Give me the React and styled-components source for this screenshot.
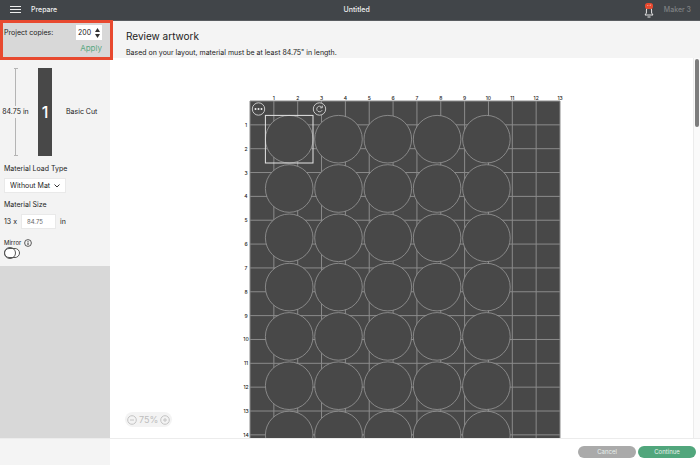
import React, { useState } from "react";
import styled, { createGlobalStyle } from 'styled-components'

const GlobalStyle = createGlobalStyle`
  * {
    box-sizing: border-box;
  }

  body {
    margin: 0;
    font-family: Inter, "Liberation Sans", sans-serif;
    font-size: 7px;
    line-height: 10px;
    color: #222;
  }

  button, input, select {
    font: inherit;
    color: inherit;
  }
`

const Page = styled.div`
  display: flex;
  flex-direction: column;
  height: 100vh;
  overflow: hidden;
  background: #fff;
`

const TopBar = styled.header`
  flex: none;
  display: grid;
  grid-template-columns: 27fr auto 26fr;
  align-items: center;
  height: 21px;
  padding: 0 9px 0 10px;
  background: #414549;
  border-bottom: 1px solid #595c60;
  color: #f0f0f0;
  font-weight: 500;
`

const BarGroup = styled.div`
  display: flex;
  align-items: center;
  justify-content: ${props => props.$end ? 'flex-end' : 'flex-start'};
  gap: ${props => props.$end ? '10px' : '10px'};
`

const IconButton = styled.button`
  display: flex;
  padding: 0;
  border: 0;
  background: none;
`

const Machine = styled.span`
  color: #7f8183;
`

const Body = styled.div`
  flex: 1;
  display: flex;
  min-height: 0;
`

const Sidebar = styled.aside`
  flex: none;
  display: flex;
  flex-direction: column;
  width: 110px;
  background: #d8d8d8;
`

const CopiesPanel = styled.form`
  position: relative;
  display: flex;
  flex-direction: column;
  align-items: flex-end;
  gap: 3px;
  height: 39px;
  padding: 4px 8px 0 4px;

  &::after {
    content: "";
    position: absolute;
    inset: -1px -3px 0 0;
    border: 3px solid #e8492f;
    pointer-events: none;
  }
`

const CopiesRow = styled.div`
  display: flex;
  align-items: center;
  justify-content: space-between;
  width: 100%;
`

const Stepper = styled.div`
  display: flex;
  align-items: center;
  width: 26px;
  height: 15px;
  padding: 0 2px;
  background: #fff;

  input {
    flex: 1;
    width: 0;
    padding: 0;
    border: 0;
    outline: 0;
    background: none;
  }
`

const Arrows = styled.div`
  display: flex;
  flex-direction: column;
  gap: 2px;
`

const ApplyButton = styled.button`
  padding: 0;
  border: 0;
  background: none;
  color: #5ba883;
  font-size: 8px;
`

const Settings = styled.section`
  display: flex;
  flex-direction: column;
  align-items: flex-start;
  padding: 8px 4px;
  background: #f3f3f3;
`

const MatPreview = styled.div`
  display: flex;
  align-items: center;
  width: 100%;
  margin: 0 0 8px -2px;
`

const Measure = styled.div`
  display: flex;
  flex-direction: column;
  align-items: center;
  gap: 1px;
  width: 27px;
  height: 88px;
  margin-right: 9px;
  white-space: nowrap;
`

const MeasureLine = styled.div`
  flex: 1;
  width: 4px;
  border-top: ${props => props.$end ? 'none' : '1px solid #b4b4b4'};
  border-bottom: ${props => props.$end ? '1px solid #b4b4b4' : 'none'};
  background: linear-gradient(#b4b4b4, #b4b4b4) center / 1px 100% no-repeat;
`

const MatThumb = styled.div`
  display: flex;
  align-items: center;
  justify-content: center;
  width: 14px;
  height: 88px;
  margin-right: 14px;
  background: #484848;
  color: #fff;
  font-size: 16px;
  font-weight: 500;
`

const Label = styled.label`
  font-size: ${props => props.$small ? '6px' : '7px'};
`

const SelectBox = styled.div`
  display: grid;
  align-items: center;
  width: 62px;
  margin: 4px 0 7px;
  background: #fff;

  select, svg {
    grid-area: 1 / 1;
  }

  select {
    appearance: none;
    height: 15px;
    padding: 0 0 0 5px;
    border: 1px solid #e9e9e9;
    background: none;
  }

  svg {
    justify-self: end;
    margin-right: 6px;
    pointer-events: none;
  }
`

const SizeRow = styled.div`
  display: flex;
  align-items: center;
  gap: 4px;
  margin: 4px 0 9px;

  input {
    width: 35px;
    height: 15px;
    padding: 0 5px;
    border: 1px solid #e9e9e9;
    background: #fff;
    color: #666;
    font-size: 6px;
  }
`

const MirrorRow = styled.div`
  display: flex;
  align-items: center;
  gap: 3px;
`

const Toggle = styled.input`
  appearance: none;
  display: flex;
  align-items: center;
  width: 16px;
  height: 10px;
  margin: 0;
  border: 1px solid #555;
  border-radius: 5px;
  background: #fff;

  &::before {
    content: "";
    flex: none;
    width: 10px;
    height: 10px;
    margin-left: -1px;
    border: 1px solid #555;
    border-radius: 50%;
  }

  &:checked::before {
    margin-left: 5px;
  }
`

const Main = styled.main`
  flex: 1;
  display: flex;
  flex-direction: column;
  min-width: 0;
`

const Intro = styled.div`
  flex: none;
  height: 37px;
  padding: 8px 16px 0;
  background: #f4f4f4;
`

const Title = styled.h1`
  margin: 0 0 5px;
  font-size: 10px;
  font-weight: 400;
  line-height: 14px;
`

const Message = styled.p`
  margin: 0;
`

const Canvas = styled.div`
  flex: 1;
  position: relative;
  display: flex;
  justify-content: center;
  min-height: 0;
  padding: 32px 2px 0 0;
  overflow: hidden;
`

const MatDrawing = styled.svg`
  flex: none;
  font-size: 5px;
  font-weight: 500;
  text-anchor: middle;
`

const ScrollTrack = styled.div`
  position: absolute;
  top: 0;
  right: 0;
  bottom: 0;
  width: 7px;
  padding: 1px;
  border-left: 1px solid #ececec;
  background: #fafafa;
`

const ScrollThumb = styled.div`
  height: 68px;
  border-radius: 3px;
  background: #7d7d7d;
`

const ZoomControl = styled.div`
  position: absolute;
  left: 15px;
  bottom: 11px;
  display: flex;
  align-items: center;
  gap: 2px;
  height: 15px;
  padding: 0 2px;
  border-radius: 8px;
  background: #f3f3f3;
  color: #bdbdbd;
  font-size: 9px;
`

const Footer = styled.footer`
  flex: none;
  display: flex;
  height: 27px;
  border-top: 1px solid #ececec;
`

const FooterSide = styled.div`
  width: 110px;
  background: #f4f4f4;
`

const Actions = styled.div`
  flex: 1;
  display: flex;
  align-items: center;
  justify-content: flex-end;
  gap: 2px;
  padding-right: 4px;
`

const PillButton = styled.button`
  width: 58px;
  height: 12px;
  padding: 0;
  border: 0;
  border-radius: 6px;
  background: ${props => props.$primary ? '#51a67c' : '#aaa'};
  color: #e9f1ec;
  font-size: 6px;
  line-height: 12px;
`

const INCH = 310 / 13
const PITCH = 49.3
const SHAPE = { x: 15.4, y: 14.4, size: 47.6 }

const range = n => Array.from({ length: n }, (_, i) => i)

const MenuIcon = () => (
  <svg width="11" height="8" viewBox="0 0 11 8" stroke="#eee">
    <path d="M0 .5h11M0 3.5h11M0 6.5h11" />
  </svg>
)

const BellIcon = () => (
  <svg width="10" height="15" viewBox="0 0 10 15">
    <path d="M1 12h8L7.600 10V7a2.600 2.600 0 0 0-5.200 0v3z" fill="none" stroke="#e6e6e6" />
    <path d="M3.500 14h3" stroke="#e6e6e6" />
    <rect x="1" y="0" width="8" height="6" rx="2.500" fill="#e8492f" />
    <path d="M3.400 2l.8 1M6.600 1.600l-.6 1.400" stroke="#f6c4ba" strokeWidth=".8" />
  </svg>
)

const InfoIcon = () => (
  <svg width="8" height="8" viewBox="0 0 8 8" fill="none" stroke="#333">
    <circle cx="4" cy="4" r="3.400" strokeWidth=".8" />
    <path d="M4 3.500v2.500M4 2v.8" />
  </svg>
)

const ZoomIcon = ({ plus }) => (
  <svg width="10" height="10" viewBox="0 0 10 10" fill="none" stroke="#c4c4c4">
    <circle cx="5" cy="5" r="4.300" />
    <path d={plus ? 'M3 5h4M5 3v4' : 'M3 5h4'} />
  </svg>
)

const Mat = () => (
  <MatDrawing width="330" height="373" viewBox="-11 -11 330 373">
    {range(13).map(i => (
      <text key={i} x={(i + 1) * INCH} y="-1.500" fill="#222">{i + 1}</text>
    ))}
    {range(14).map(i => (
      <text key={i} x="-4" y={(i + 1) * INCH + 2} fill="#222">{i + 1}</text>
    ))}
    <rect width="310" height="400" fill="#484848" />
    <g stroke="#8b8b8b">
      {range(14).map(i => <path key={i} d={`M${i * INCH} 0v400`} />)}
      {range(16).map(i => <path key={i} d={`M0 ${i * INCH}h310`} />)}
    </g>
    <g fill="#484848" stroke="#989898" strokeWidth=".8">
      {range(8).map(row => range(5).map(col => (
        <circle
          key={`${row}-${col}`}
          cx={SHAPE.x + SHAPE.size / 2 + col * PITCH}
          cy={SHAPE.y + SHAPE.size / 2 + row * PITCH}
          r={SHAPE.size / 2}
        />
      )))}
    </g>
    <rect x={SHAPE.x} y={SHAPE.y} width={SHAPE.size} height={SHAPE.size} fill="none" stroke="#e4e4e4" />
    <g fill="#484848" stroke="#c8c8c8">
      <circle cx="8.500" cy="8" r="6.200" />
      <circle cx="69.500" cy="8" r="6.200" />
      <path d="M71.700 6.200a2.800 2.800 0 1 0 .4 3M72.300 4.600v2.200h-2.200" fill="none" />
    </g>
    <g fill="#eee">
      <circle cx="5.500" cy="8" r="1" />
      <circle cx="8.500" cy="8" r="1" />
      <circle cx="11.500" cy="8" r="1" />
    </g>
  </MatDrawing>
)

const App = () => {
  const [copies, setCopies] = useState('200')
  const [size, setSize] = useState('84.75')

  return (
    <Page>
      <GlobalStyle />
      <TopBar>
        <BarGroup>
          <IconButton aria-label="Menu"><MenuIcon /></IconButton>
          <span>Prepare</span>
        </BarGroup>
        <span>Untitled</span>
        <BarGroup $end>
          <IconButton aria-label="Notifications"><BellIcon /></IconButton>
          <Machine>Maker 3</Machine>
        </BarGroup>
      </TopBar>
      <Body>
        <Sidebar>
          <CopiesPanel onSubmit={e => e.preventDefault()}>
            <CopiesRow>
              <Label htmlFor="copies">Project copies:</Label>
              <Stepper>
                <input id="copies" value={copies} onChange={e => setCopies(e.target.value)} />
                <Arrows>
                  <IconButton type="button" aria-label="More copies" onClick={() => setCopies(String(Number(copies) + 1))}>
                    <svg width="5" height="4" viewBox="0 0 5 4"><path d="M0 4h5L2.500 0z" fill="#333" /></svg>
                  </IconButton>
                  <IconButton type="button" aria-label="Fewer copies" onClick={() => setCopies(String(Number(copies) - 1))}>
                    <svg width="5" height="4" viewBox="0 0 5 4"><path d="M0 0h5L2.500 4z" fill="#333" /></svg>
                  </IconButton>
                </Arrows>
              </Stepper>
            </CopiesRow>
            <ApplyButton>Apply</ApplyButton>
          </CopiesPanel>
          <Settings>
            <MatPreview>
              <Measure>
                <MeasureLine />
                <span>84.75 in</span>
                <MeasureLine $end />
              </Measure>
              <MatThumb>1</MatThumb>
              <span>Basic Cut</span>
            </MatPreview>
            <Label htmlFor="load">Material Load Type</Label>
            <SelectBox>
              <select id="load"><option>Without Mat</option></select>
              <svg width="6" height="4" viewBox="0 0 6 4" fill="none" stroke="#333"><path d="M.5.5L3 3 5.500.5" /></svg>
            </SelectBox>
            <Label htmlFor="size">Material Size</Label>
            <SizeRow>
              <span>13 x</span>
              <input id="size" value={size} onChange={e => setSize(e.target.value)} />
              <span>in</span>
            </SizeRow>
            <MirrorRow>
              <Label htmlFor="mirror" $small>Mirror</Label>
              <InfoIcon />
            </MirrorRow>
            <Toggle id="mirror" type="checkbox" />
          </Settings>
        </Sidebar>
        <Main>
          <Intro>
            <Title>Review artwork</Title>
            <Message>Based on your layout, material must be at least 84.75" in length.</Message>
          </Intro>
          <Canvas>
            <Mat />
            <ScrollTrack><ScrollThumb /></ScrollTrack>
            <ZoomControl>
              <IconButton aria-label="Zoom out"><ZoomIcon /></IconButton>
              <span>75%</span>
              <IconButton aria-label="Zoom in"><ZoomIcon plus /></IconButton>
            </ZoomControl>
          </Canvas>
        </Main>
      </Body>
      <Footer>
        <FooterSide />
        <Actions>
          <PillButton>Cancel</PillButton>
          <PillButton $primary>Continue</PillButton>
        </Actions>
      </Footer>
    </Page>
  )
}

export default App
